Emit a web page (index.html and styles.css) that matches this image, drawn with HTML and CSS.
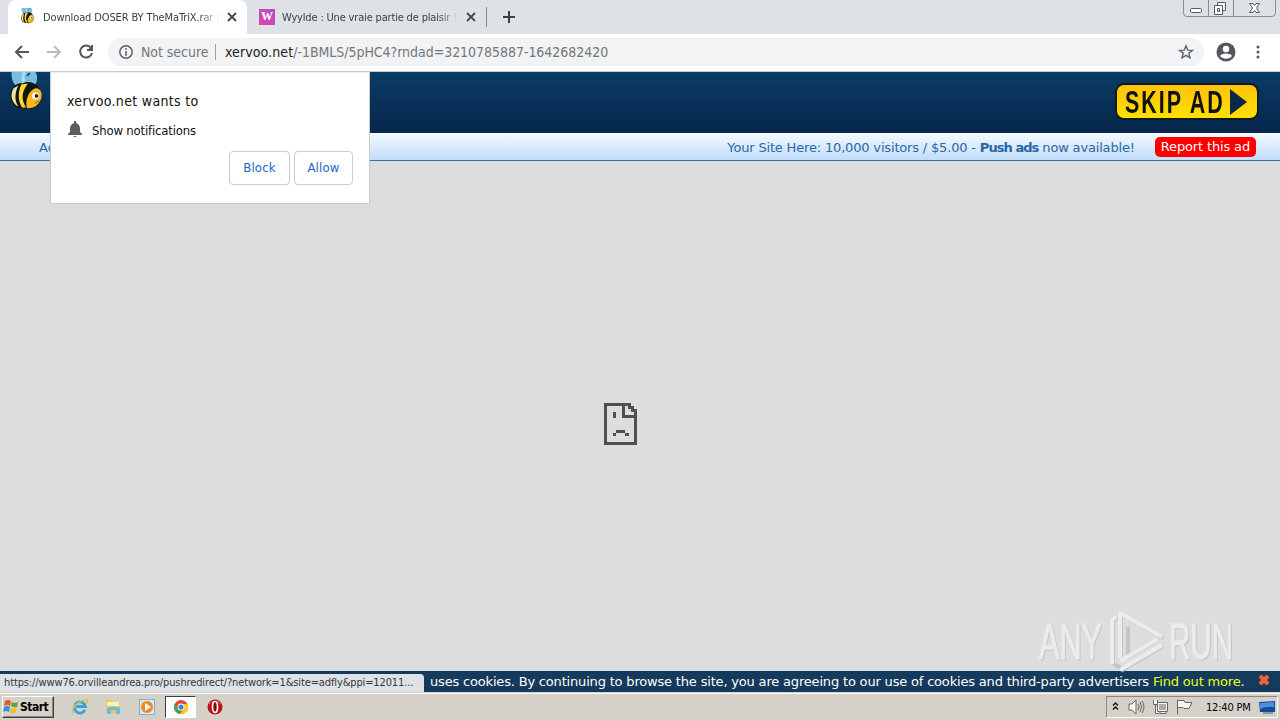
FILE: index.html
```html
<!DOCTYPE html>
<html lang="en">
<head>
  <meta charset="UTF-8" />
  <title>Download DOSER BY TheMaTriX.rar</title>
  <link rel="stylesheet" href="styles.css">
</head>
<body>
  <!-- shared bee drawing -->
  <svg class="defs" width="0" height="0">
    <symbol id="bee" viewBox="0 0 36 46">
      <path d="M3 0C2 9 6 15 13 18L26 15C31 10 30 4 28 0Z" fill="#78bee0"/>
      <path d="M16 0C14 7 15 12 18 16" fill="none" stroke="#a9dcf1" stroke-width="3"/>
      <path d="M19 4L22 1" stroke="#174d71" stroke-width="2"/>
      <path d="M2 24C3 16 8 11 14 12C25 7 35 16 34 27C33 36 24 41 15 38C6 38 1 32 2 24Z" fill="#151513"/>
      <path d="M5 17C1 24 3 31 8 35L10 36C6 30 6 22 10 14Z" fill="#f0e5a0"/>
      <path d="M13 13C9 22 10 31 14 37L18 37C13 29 13 21 20 12Z" fill="#ffd82c"/>
      <path d="M19 38C17 30 20 20 28 17C36 17 36 28 31 33C28 37 24 38 19 38Z" fill="#f7ba1c"/>
      <ellipse cx="28" cy="25" rx="3.600" ry="3.600" fill="#fff"/><circle cx="29" cy="25" r="2" fill="#33152d"/>
      <path d="M27 33L32 30" stroke="#9b4b0d"/>
    </symbol>
  </svg>

  <div class="tabstrip">
    <div class="tab active">
      <svg class="favicon" viewBox="0 0 36 46"><use href="#bee"/></svg>
      <span class="tab-title">Download DOSER BY TheMaTriX.rar |</span>
      <svg class="tab-close" viewBox="0 0 10 10"><path d="M1 1L9 9M9 1L1 9"/></svg>
    </div>
    <div class="tab second">
      <span class="w-icon">w</span>
      <span class="tab-title">Wyylde : Une vraie partie de plaisir !</span>
      <svg class="tab-close" viewBox="0 0 10 10"><path d="M1 1L9 9M9 1L1 9"/></svg>
    </div>
    <svg class="new-tab" viewBox="0 0 12 12"><path d="M6 0V12M0 6H12"/></svg>
    <svg class="window-buttons" viewBox="0 0 93 17">
      <path d="M.5 0V13Q.5 16.5 4 16.5H89Q92.500 16.500 92.500 13V0M25.500 0V16M50.500 0V16" fill="none" stroke="#898e96"/>
      <rect x="7.500" y="8.500" width="11" height="4" rx="1" fill="#fff" stroke="#555b66"/>
      <path d="M34.500 2.500H42.500V10.500H34.500Z" fill="#fff" stroke="#555b66"/>
      <path d="M31.500 5.500H39.500V14.500H31.500Z" fill="#fff" stroke="#555b66"/>
      <path d="M34.500 8.500H36.500V11.500H34.500Z" fill="#ddd" stroke="#555b66"/>
      <path d="M66.500 3.500H70L71.500 5.500L73 3.500H76.500L73.500 8L76.500 12.500H73L71.500 10.500L70 12.500H66.500L69.500 8Z" fill="#fff" stroke="#555b66"/>
    </svg>
  </div>

  <div class="toolbar">
    <svg class="nav-icon" viewBox="0 0 16 16"><path d="M15 8H2M8 2L2 8L8 14"/></svg>
    <svg class="nav-icon off" viewBox="0 0 16 16"><path d="M1 8H14M8 2L14 8L8 14"/></svg>
    <svg class="nav-icon" viewBox="0 0 16 16"><path d="M13 4A6 6 0 1 0 14 9M14 1V6H9"/><path d="M14.500 1V6.500H9Z" fill="#54575b" stroke="none"/></svg>
    <div class="omnibox">
      <svg class="info" viewBox="0 0 14 14"><circle cx="7" cy="7" r="6.200"/><path d="M7 6V11M7 3V4.700"/></svg>
      <span class="secure">Not secure</span>
      <i class="divider"></i>
      <span class="url"><b>xervoo.net</b>/-1BMLS/5pHC4?rndad=3210785887-1642682420</span>
      <svg class="star" viewBox="0 0 16 16"><path d="M8 1.800L9.700 6.100L14.300 6.400L10.800 9.300L12 13.800L8 11.300L4 13.800L5.200 9.300L1.700 6.400L6.300 6.100Z"/></svg>
    </div>
    <svg class="avatar" viewBox="0 0 20 20"><circle cx="10" cy="10" r="9.500" fill="#54585e"/><circle cx="10" cy="7" r="3.200" fill="#fff"/><path d="M4 14C5 10.500 15 10.500 16 14C13 17.500 7 17.500 4 14Z" fill="#fff"/></svg>
    <svg class="dots" viewBox="0 0 4 14"><circle cx="2" cy="2" r="1.500"/><circle cx="2" cy="7" r="1.500"/><circle cx="2" cy="12" r="1.500"/></svg>
  </div>

  <div class="page">
    <div class="site-header">
      <svg class="logo" viewBox="0 0 36 46"><use href="#bee"/></svg>
      <div class="skip"><span>SKIP AD</span><svg viewBox="0 0 17 26"><path d="M0 0L17 13L0 26Z"/></svg></div>
    </div>
    <div class="site-bar">
      <span class="advertise">Advertising</span>
      <span class="offer">Your Site Here: 10,000 visitors / $5.00 - <b>Push ads</b> now available!</span>
      <span class="report">Report this ad</span>
    </div>
    <div class="frame">
      <svg class="sad" viewBox="0 0 33 42" shape-rendering="crispEdges">
        <path d="M0 0H27V3H30V6H33V42H0ZM3 3V39H30V15H18V3ZM21 3V12H30V9H27V6H24V3Z" fill-rule="evenodd"/>
        <path d="M9 9H12V15H9ZM12 27H21V30H12ZM9 30H12V33H9ZM21 30H25V33H21Z"/>
      </svg>
    </div>
    <div class="cookies">
      <span>uses cookies. By continuing to browse the site, you are agreeing to our use of cookies and third-party advertisers</span>
      <a>Find out more</a><span class="period">.</span>
      <svg viewBox="0 0 12 12"><path d="M2 2L10 10M10 2L2 10"/></svg>
    </div>

    <div class="prompt">
      <div class="prompt-title">xervoo.net wants to</div>
      <div class="permission">
        <svg viewBox="0 0 14 16"><path d="M6 0H8V2C11 3 12 5 12 8V11L14 13V14H0V13L2 11V8C2 5 3 3 6 2ZM5 15H9Q7 17 5 15Z"/></svg>
        <span>Show notifications</span>
      </div>
      <div class="prompt-buttons"><button>Block</button><button>Allow</button></div>
    </div>
    <div class="status"><span>https://www76.orvilleandrea.pro/pushredirect/?network=1&amp;site=adfly&amp;ppi=12011...</span></div>
    <svg class="watermark" viewBox="0 0 220 72">
      <g class="shadow" transform="translate(1 1)">
        <text x="3" y="53" textLength="63" lengthAdjust="spacingAndGlyphs">ANY</text>
        <text x="133" y="53" textLength="64" lengthAdjust="spacingAndGlyphs">RUN</text>
        <path d="M76 58V14L80 11M84 52V7L126 31M91 20V50L122 32M84 64L126 39M77 57L84 61"/>
      </g>
      <g>
        <text x="3" y="53" textLength="63" lengthAdjust="spacingAndGlyphs">ANY</text>
        <text x="133" y="53" textLength="64" lengthAdjust="spacingAndGlyphs">RUN</text>
        <path d="M76 58V14L80 11M84 52V7L126 31M84 55L122 33M84 64L126 39"/>
      </g>
    </svg>
  </div>

  <div class="taskbar">
    <div class="start">
      <svg viewBox="0 0 16 16"><path d="M2 2Q5 0 8 2L7 7Q4 5 1 7Z" fill="#e65a25"/><path d="M9 3Q12 5 15 3L14 8Q11 9 8 7Z" fill="#65a52b"/><path d="M1 8Q4 6 7 8L6 13Q3 11 0 13Z" fill="#398ed5"/><path d="M8 9Q11 10 14 9L12 14Q9 15 7 13Z" fill="#f4bb20"/></svg>
      <span>Start</span>
    </div>
    <div class="launch">
      <svg viewBox="0 0 18 18"><path d="M14 12A5.600 5.600 0 1 1 14.500 8.500H5" fill="none" stroke="#35a3df" stroke-width="2.800"/><path d="M2 15C-1 11 9 1 16 2C17 3 16 5 15 6" fill="none" stroke="#e6bd3c" stroke-width="1.400"/></svg>
    </div>
    <div class="launch">
      <svg viewBox="0 0 18 18"><path d="M2 2H8L9 4H16V15H2Z" fill="#e5c765"/><path d="M3 4H15V8H3Z" fill="#fff3ae"/><path d="M3 10Q9 7 16 10V16H12V12H7V16H3Z" fill="#70b8df"/></svg>
    </div>
    <div class="launch">
      <svg viewBox="0 0 18 18"><path d="M1 1H17V17H1Z" fill="#7db1dc"/><path d="M2 2H16V16H2Z" fill="#d6e9f7"/><circle cx="9" cy="9" r="6" fill="#ef8a1d"/><path d="M7 5L13 9L7 13Z" fill="#fff"/></svg>
    </div>
    <div class="launch pressed">
      <svg viewBox="0 0 18 18"><circle cx="9" cy="9" r="7" fill="#dd493e"/><path d="M9 6H15.500A7 7 0 0 1 8 16L12 10Z" fill="#f8c72c"/><path d="M3 5.500L6 11L9 12L8 16A7 7 0 0 1 3 5.500" fill="#35a852"/><circle cx="9" cy="9" r="3.500" fill="#fff"/><circle cx="9" cy="9" r="2.600" fill="#4482ce"/></svg>
    </div>
    <div class="launch">
      <svg viewBox="0 0 18 18"><circle cx="9" cy="9" r="7.500" fill="#ba1016"/><path d="M3 6Q9 0 15 6" stroke="#e66a62" fill="none"/><ellipse cx="9" cy="9" rx="2.500" ry="5.500" fill="#7e080c" stroke="#fff" stroke-width="1.700"/></svg>
    </div>
    <div class="tray">
      <svg class="chevrons" viewBox="0 0 7 9"><path d="M1 4L3.500 1.500L6 4M1 8L3.500 5.500L6 8"/></svg>
      <svg class="tray-icon" viewBox="0 0 17 16"><path d="M1 5H4L8 1V15L4 11H1Z"/><path d="M10 5Q12 8 10 11M12 3Q15 8 12 13M14 2Q18 8 14 14" fill="none"/></svg>
      <svg class="tray-icon" viewBox="0 0 17 16"><path d="M5.500 3.500H15.500V12.500H5.500ZM8 13V14.500H14V13M1.500 1V5.500H5.500V1M3.500 5V14.500H7"/><path d="M7 5H14V11H7Z" fill="#aaa" stroke="none"/></svg>
      <svg class="tray-icon" viewBox="0 0 17 16"><path d="M1.500 1V15.500M2 1.500H8L9 3.500H16L13 9.500H8L7 8.500H2"/></svg>
      <span class="clock">12:40 PM</span>
      <svg class="desktop" viewBox="0 0 16 13"><path d="M0 1L16 0V11L1 11Z" fill="#164ba0"/><path d="M1 2L15 1V6Q6 5 1 8Z" fill="#4a90dc"/><path d="M4 12H14" stroke="#3c5c8a"/></svg>
    </div>
  </div>
</body>
</html>
```
FILE: styles.css
```css
* { box-sizing: border-box; }
body {
  margin: 0;
  width: 1280px;
  height: 720px;
  overflow: hidden;
  display: flex;
  flex-direction: column;
  font-family: "DejaVu Sans Condensed", "DejaVu Sans", sans-serif;
  background: #ddd;
}
svg { display: block; flex: none; }
.defs { position: absolute; }

/* Browser tabs */
.tabstrip { height: 34px; flex: none; display: flex; align-items: center; background: #dee1e6; padding-left: 8px; }
.tab { height: 34px; display: flex; align-items: center; color: #3c4043; font-size: 11px; }
.tab.active { width: 239px; padding-left: 12px; background: #fff; border-radius: 8px 8px 0 0; }
.tab.second { width: 240px; height: 20px; padding-left: 12px; border-right: 1px solid #85888d; }
.favicon { width: 15px; height: 18px; margin-right: 8px; }
.tab-title {
  width: 177px;
  overflow: hidden;
  white-space: nowrap;
  letter-spacing: -0.12px;
  -webkit-mask-image: linear-gradient(90deg, #000 88%, transparent);
}
.second .tab-title { letter-spacing: -0.17px; }
.tab-close { width: 10px; height: 10px; margin-left: 7px; fill: none; stroke: #45494d; stroke-width: 1.8; }
.w-icon {
  width: 16px;
  height: 16px;
  margin-right: 7px;
  background: linear-gradient(35deg, #e83cac, #a853c9);
  color: #fff;
  text-align: center;
  font: bold 16px/12px "Liberation Serif", serif;
}
.new-tab { width: 12px; height: 12px; margin-left: 16px; stroke: #3c4043; stroke-width: 2; }
.window-buttons { width: 93px; height: 17px; margin: 0 4px 0 auto; align-self: flex-start; }

/* Toolbar */
.toolbar { height: 38px; flex: none; display: flex; align-items: center; padding: 0 20px 2px 14px; background: #fff; border-bottom: 1px solid #c7cbd0; }
.nav-icon { width: 16px; height: 16px; margin-right: 16px; fill: none; stroke: #54575b; stroke-width: 2; }
.nav-icon.off { stroke: #b9bbbe; }
.omnibox { width: 1096px; height: 28px; margin-left: -2px; border-radius: 14px; background: #f1f3f4; display: flex; align-items: center; padding: 0 10px 0 11px; font-size: 14px; color: #74777b; }
.info { width: 14px; height: 14px; margin-right: 8px; fill: none; stroke: #5f6368; stroke-width: 1.5; }
.secure { width: 67px; white-space: nowrap; letter-spacing: -0.05px; }
.divider { width: 1px; height: 16px; margin: 0 9px 0 7px; background: #9c9fa3; }
.url { letter-spacing: -0.04px; white-space: nowrap; }
.url b { font-weight: normal; color: #222; letter-spacing: 0.1px; }
.star { width: 16px; height: 16px; margin-left: auto; fill: none; stroke: #5f6368; stroke-width: 1.4; }
.avatar { width: 20px; height: 20px; margin-left: 12px; }
.dots { width: 4px; height: 14px; margin-left: auto; fill: #54585e; }

/* Web page */
.page { height: 620px; flex: none; position: relative; display: flex; flex-direction: column; }
.site-header { height: 61px; flex: none; display: flex; justify-content: space-between; background: linear-gradient(#0a3c66, #06264a); padding: 0 21px 0 8px; }
.logo { width: 36px; height: 44px; }
.skip {
  width: 144px;
  height: 37px;
  margin-top: 11px;
  padding-left: 8px;
  display: flex;
  align-items: center;
  justify-content: space-between;
  padding-right: 10px;
  border: 2px solid #10191d;
  border-radius: 9px;
  background: linear-gradient(#ffc20a, #ffe000);
  color: #111;
}
.skip span { width: 98px; font: bold 32px/32px "Liberation Sans", sans-serif; letter-spacing: 3px; transform: scaleX(0.67); transform-origin: left; white-space: nowrap; }
.skip svg { width: 17px; height: 26px; fill: #0a2946; }
.site-bar {
  height: 28px;
  flex: none;
  display: flex;
  align-items: center;
  background: linear-gradient(#f4faff, #c1dcfb);
  border-bottom: 1px solid #426da5;
  padding: 1px 24px 0 39px;
  font: 13px "DejaVu Sans", sans-serif;
  color: #2a67a8;
}
.offer { margin-left: auto; letter-spacing: -0.17px; white-space: nowrap; }
.offer b { letter-spacing: -0.95px; }
.report { height: 20px; line-height: 20px; margin: -1px 0 0 20px; padding: 0 6px; border-radius: 5px; background: #f00; color: #fff; letter-spacing: -0.15px; }
.frame { flex: 1; padding: 242px 0 0 604px; border-bottom: 5px solid #d5dfe6; }
.sad { width: 33px; height: 42px; fill: #505050; }
.cookies { height: 21px; flex: none; display: flex; align-items: center; padding-left: 430px; background: #153a5c; color: #fff; font: 13px "DejaVu Sans", sans-serif; letter-spacing: -0.178px; white-space: nowrap; }
.cookies a { margin-left: 4px; color: #e7ff18; }
.cookies svg { width: 12px; height: 12px; margin: -3px 0 0 14px; stroke: #ed6038; stroke-width: 4; }

/* Permission prompt over the page */
.prompt { position: absolute; left: 50px; top: 0; width: 320px; height: 132px; padding: 19px 16px 0; background: #fff; border: 1px solid #c7c9cc; border-top-color: #eee; border-radius: 0 0 2px 2px; color: #111; }
.prompt-title { font-size: 14px; line-height: 19px; letter-spacing: 0.33px; }
.permission { display: flex; align-items: center; height: 18px; margin-top: 10px; font-size: 13px; letter-spacing: -0.18px; }
.permission svg { width: 14px; height: 16px; margin: 0 10px 3px 1px; fill: #5b5d60; }
.prompt-buttons { display: flex; justify-content: flex-end; gap: 4px; margin-top: 12px; }
button { width: 61px; height: 34px; padding: 0 0 1px; border: 1px solid #cbcdd1; border-radius: 4px; background: #fff; color: #1967c6; font: 13px "DejaVu Sans Condensed", sans-serif; letter-spacing: 0.2px; }
button + button { width: 59px; }

/* Link status */
.status { position: absolute; left: 0; bottom: 0; width: 424px; height: 18px; padding: 0 4px; border-radius: 0 4px 0 0; background: #dee1e6; color: #35383b; font-size: 11px; line-height: 18px; white-space: nowrap; }
.status span { letter-spacing: -0.125px; }

.watermark { position: absolute; left: 1036px; top: 534px; width: 220px; height: 72px; opacity: 0.7; fill: #f3f3f3; font: 50px "Liberation Sans", sans-serif; }
.watermark path { fill: none; stroke: #f3f3f3; stroke-width: 4; stroke-linejoin: round; }
.watermark text { stroke: #f3f3f3; stroke-width: 1; }
.watermark .shadow { fill: #bbb; }
.watermark .shadow path, .watermark .shadow text { stroke: #bbb; }

/* Windows taskbar */
.taskbar { height: 28px; flex: none; display: flex; align-items: center; padding: 1px 2px 0 2px; background: #d5d0c8; border-top: 1px solid #d5d0c8; box-shadow: inset 0 1px #fff; }
.start { width: 52px; height: 22px; margin-right: 10px; display: flex; align-items: center; background: #d5d0c8; border: 1px solid; border-color: #fff #404040 #404040 #fff; box-shadow: inset -1px -1px #888; color: #000; font-size: 12px; font-weight: bold; letter-spacing: -0.5px; }
.start svg { width: 16px; height: 16px; margin-right: 1px; }
.launch { width: 31px; height: 22px; margin-right: 2.8px; display: grid; place-items: center; }
.launch svg { width: 18px; height: 18px; }
.launch.pressed { background: #fff; border: 1px solid; border-color: #404040 #fff #fff #404040; }
.tray { width: 172px; height: 22px; margin-left: auto; display: flex; align-items: center; border: 1px solid; border-color: #888 #fff #fff #888; padding-left: 5px; }
.tray svg { fill: none; }
.chevrons { width: 7px; height: 10px; margin: 0 9px 2px 0; stroke: #111; stroke-width: 1.4; }
.tray-icon { width: 17px; height: 16px; margin-right: 7px; stroke: #666; stroke-width: 1; }
.tray .tray-icon { fill: #f6f5f2; }
.clock { width: 46px; margin-left: 6px; color: #000; font-size: 11px; letter-spacing: -0.2px; white-space: nowrap; }
.desktop { width: 16px; height: 13px; margin-left: 7px; }
```
